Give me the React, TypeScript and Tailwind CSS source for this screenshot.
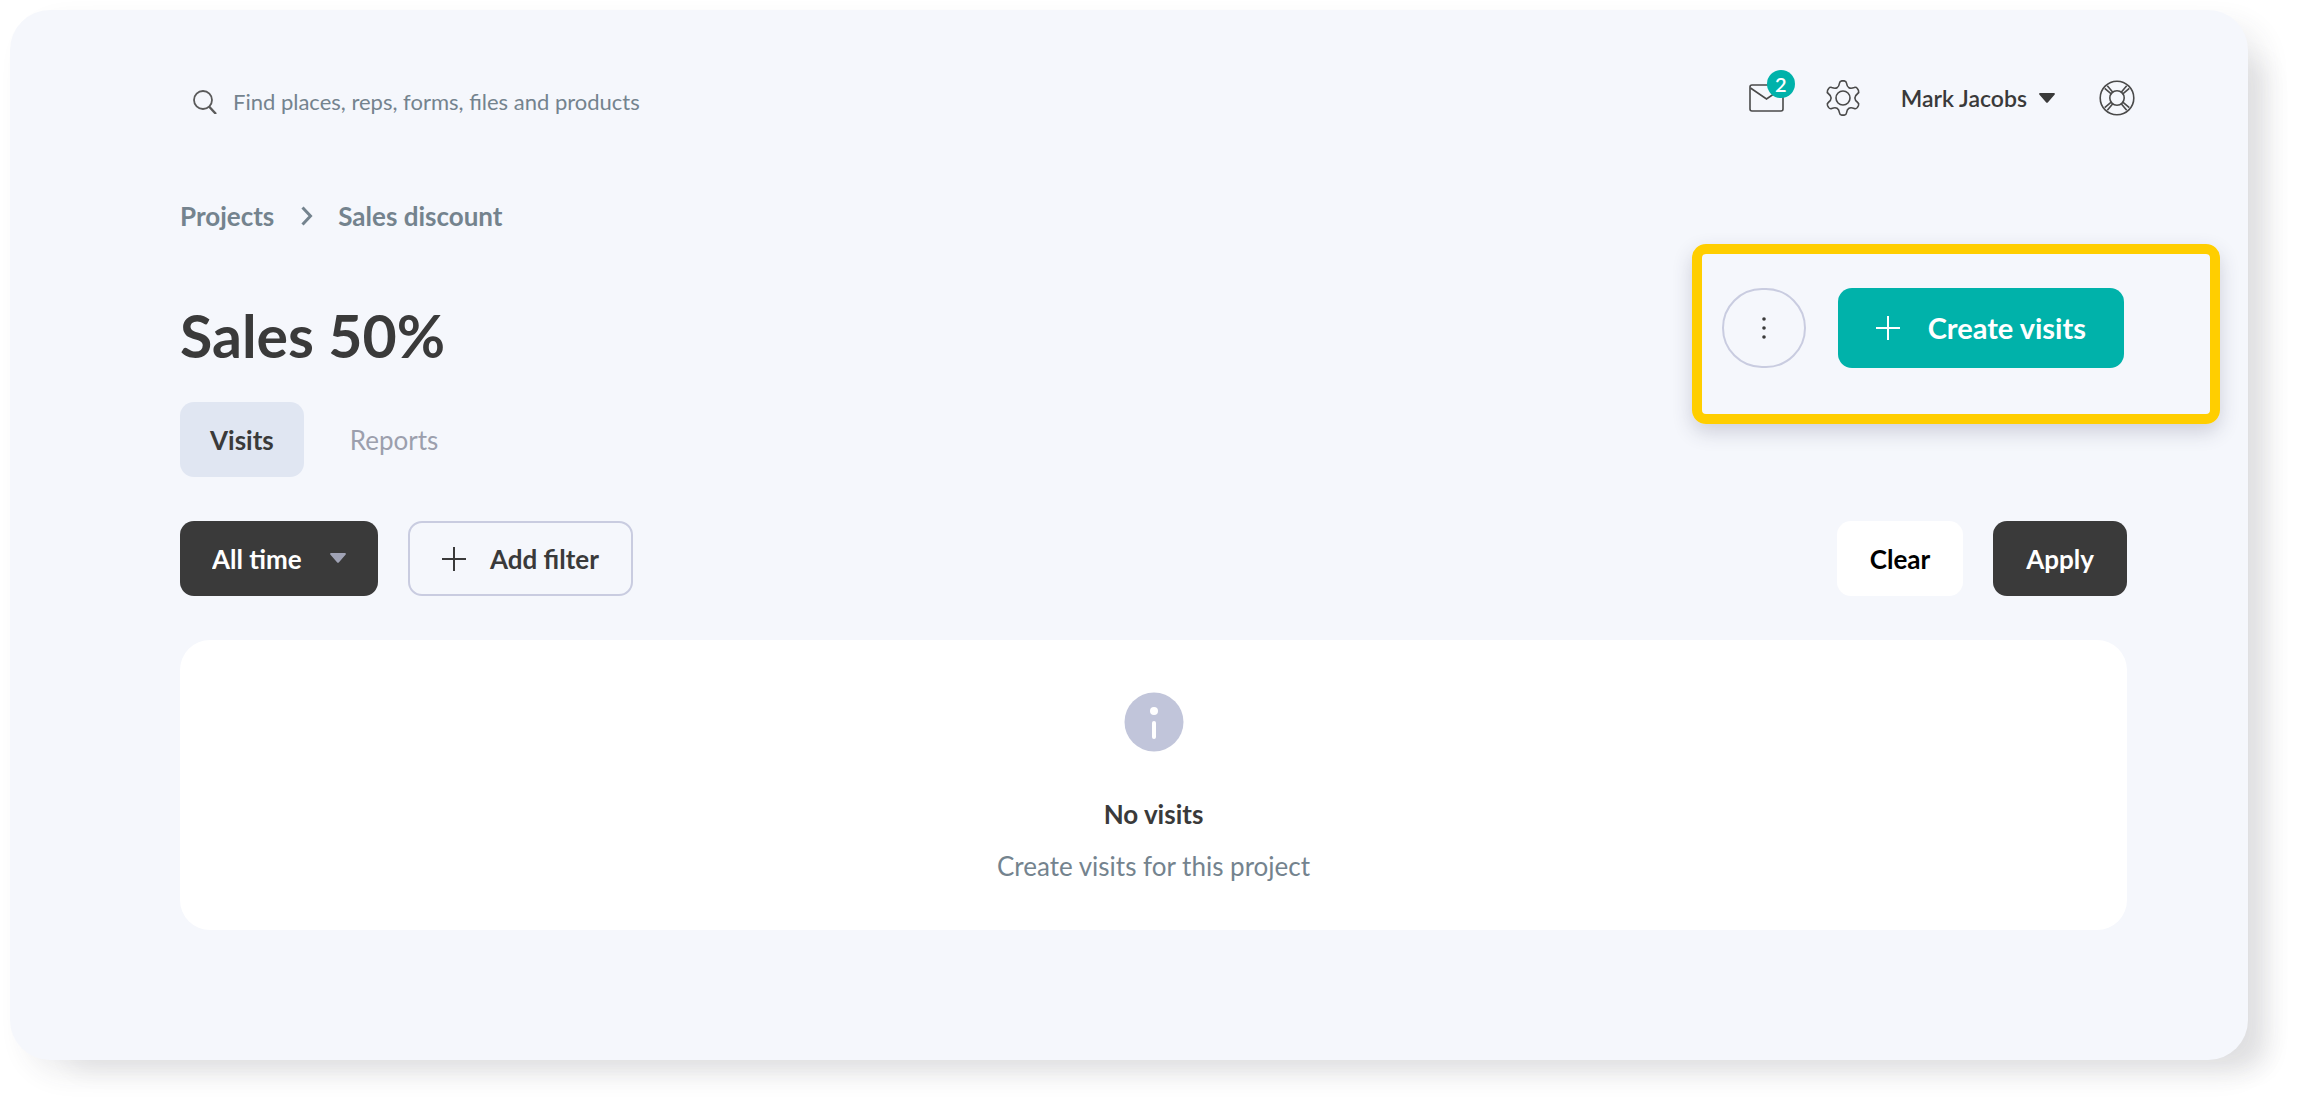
import { useState } from "react";

const polar = (r: number, deg: number) => {
  const a = ((deg - 90) * Math.PI) / 180;
  return `${(18 + r * Math.cos(a)).toFixed(2)} ${(18 + r * Math.sin(a)).toFixed(2)}`;
};

// six rounded teeth around the centre
const GEAR_PATH =
  [0, 60, 120, 180, 240, 300]
    .map((t, i) =>
      `${i ? "L" : "M"}${polar(15.4, t - 13)} Q${polar(17.2, t - 11)} ${polar(17.2, t - 4)} L${polar(17.2, t + 4)} Q${polar(17.2, t + 11)} ${polar(15.4, t + 13)} Q${polar(9, t + 30)} ${polar(15.4, t + 47)}`,
    )
    .join(" ") + " Z";

function SearchIcon() {
  return (
    <svg className="size-6" viewBox="0 0 24 24" fill="none" stroke="#5a5a5a" strokeWidth="1.8" aria-hidden="true">
      <circle cx="10" cy="10" r="9" />
      <path d="M16 16.5 23 24" strokeWidth="2.4" />
    </svg>
  );
}

function MailIcon() {
  return (
    <svg className="h-7 w-9" viewBox="0 0 36 28" fill="none" stroke="#4a4a4a" strokeWidth="1.6" aria-hidden="true">
      <rect x="1" y="1" width="33" height="26" rx="2" />
      <path d="M1.5 4 17.5 15 33.5 4" />
    </svg>
  );
}

function GearIcon() {
  return (
    <svg className="size-9" viewBox="0 0 36 36" fill="none" stroke="#4a4a4a" strokeWidth="1.6" strokeLinejoin="round" aria-hidden="true">
      <path d={GEAR_PATH} />
      <circle cx="18" cy="18" r="7" />
    </svg>
  );
}

function HelpIcon() {
  return (
    <svg className="size-9" viewBox="0 0 36 36" fill="none" stroke="#4a4a4a" strokeWidth="1.6" aria-hidden="true">
      <circle cx="18" cy="18" r="16.8" />
      <circle cx="18" cy="18" r="7.2" />
      <path d="M12.200 13.800 5.700 8.300M13.800 12.200 8.300 5.700M23.800 13.800 30.300 8.300M22.200 12.200 27.700 5.700M12.200 22.200 5.700 27.700M13.800 23.800 8.300 30.300M23.800 22.200 30.300 27.700M22.200 23.800 27.700 30.300" />
    </svg>
  );
}

function Caret({ className }: { className: string }) {
  return (
    <svg className={className} viewBox="0 0 16 10" fill="currentColor" aria-hidden="true">
      <path d="M1.2 0h13.6c1 0 1.4 1 .7 1.700L9 9.200c-.6.7-1.500.7-2 0L.5 1.700C-.2 1 .2 0 1.200 0Z" />
    </svg>
  );
}

function PlusIcon() {
  return (
    <svg className="size-6" viewBox="0 0 24 24" fill="none" stroke="currentColor" strokeWidth="2" aria-hidden="true">
      <path d="M12 0v24M0 12h24" />
    </svg>
  );
}

const TABS = ["Visits", "Reports"];

export default function App() {
  const [tab, setTab] = useState("Visits");

  return (
    <div className="bg-white pt-[10px] pr-[50px] pb-[50px] pl-[10px] font-['Lato',sans-serif] text-[26px] leading-8 text-[#3a3a3a]">
      <div className="rounded-[40px] bg-[#f5f7fc] pt-[70px] pr-[121px] pb-[130px] pl-[170px] shadow-[16px_14px_28px_rgba(50,50,70,0.09),40px_30px_24px_-20px_rgba(50,50,70,0.08)]">
        <header className="-mr-2 flex h-9 items-center justify-between">
          <label className="flex items-center gap-4 pt-2 pl-[13px]">
            <SearchIcon />
            <input
              type="search"
              aria-label="Search"
              placeholder="Find places, reps, forms, files and products"
              className="w-[480px] bg-transparent text-[22px] outline-none placeholder:text-[#74838e]"
            />
          </label>
          <div className="flex items-center">
            <button aria-label="Messages" className="relative mr-10">
              <MailIcon />
              <span className="absolute -top-[14px] -right-[10px] flex size-7 items-center justify-center rounded-full bg-[#00b2aa] text-xl font-semibold text-white">2</span>
            </button>
            <button aria-label="Settings" className="mr-10"><GearIcon /></button>
            <button className="mr-11 flex items-center gap-3 text-[23px] font-semibold">
              Mark Jacobs
              <Caret className="h-[10px] w-4" />
            </button>
            <button aria-label="Help"><HelpIcon /></button>
          </div>
        </header>

        <nav aria-label="Breadcrumb" className="mt-[84px] flex items-center gap-6 font-bold text-[#74838e]">
          <a href="#projects">Projects</a>
          <svg className="h-5 w-4" viewBox="0 0 16 20" fill="none" stroke="currentColor" strokeWidth="3" aria-hidden="true">
            <path d="m4.500 1.500 8 8.500-8 8.500" />
          </svg>
          <a href="#sales-discount">Sales discount</a>
        </nav>

        <div className="mt-14 flex items-start justify-between">
          <h1 className="mt-3 text-[59px] leading-[72px] font-bold">Sales 50%</h1>
          <div className="relative mr-[3px] flex gap-8">
            <button aria-label="More" className="flex h-20 w-[84px] items-center justify-center rounded-full border-2 border-[#c9cce0]">
              <svg className="h-6 w-1" viewBox="0 0 4 24" fill="#3a3a3a" aria-hidden="true">
                <circle cx="2" cy="3" r="1.800" />
                <circle cx="2" cy="12" r="1.800" />
                <circle cx="2" cy="21" r="1.800" />
              </svg>
            </button>
            <button className="flex h-20 items-center gap-7 rounded-[14px] bg-[#00b2aa] px-[38px] text-[29px] font-bold text-white">
              <PlusIcon />
              Create visits
            </button>
            {/* highlight frame around the actions */}
            <div className="pointer-events-none absolute -top-11 -right-24 -bottom-14 -left-[30px] rounded-[14px] border-[10px] border-[#ffce00] shadow-[0_8px_20px_rgba(50,50,80,0.2)]" />
          </div>
        </div>

        <div role="tablist" className="mt-[30px] flex gap-4">
          {TABS.map((t) => (
            <button
              key={t}
              role="tab"
              aria-selected={tab === t}
              onClick={() => setTab(t)}
              className={`h-[75px] rounded-[14px] px-[30px] ${tab === t ? "bg-[#e0e6f2] font-bold" : "text-[#9c9fad]"}`}
            >
              {t}
            </button>
          ))}
        </div>

        <div className="mt-11 flex items-center justify-between font-bold">
          <div className="flex gap-[30px]">
            <div className="relative">
              <select aria-label="Period" className="h-[75px] w-[198px] appearance-none rounded-[14px] bg-[#3a3a3a] pl-8 text-white">
                <option>All time</option>
              </select>
              <Caret className="pointer-events-none absolute top-8 right-8 h-[10px] w-4 text-[#a0a3b5]" />
            </div>
            <button className="flex h-[75px] items-center gap-6 rounded-[14px] border-2 border-[#c9cce0] px-8">
              <PlusIcon />
              Add filter
            </button>
          </div>
          <div className="flex gap-[30px]">
            <button className="h-[75px] rounded-[14px] bg-white px-[33px] text-black">Clear</button>
            <button className="h-[75px] rounded-[14px] bg-[#3a3a3a] px-[33px] text-white">Apply</button>
          </div>
        </div>

        <section className="mt-11 flex flex-col items-center rounded-[30px] bg-white pt-[52px] pb-12">
          <svg className="size-[60px]" viewBox="0 0 60 60" aria-hidden="true">
            <circle cx="30" cy="30" r="29.500" fill="#c1c5da" />
            <circle cx="30" cy="19" r="4" fill="#fff" />
            <rect x="28" y="29" width="4" height="18" rx="2" fill="#fff" />
          </svg>
          <h2 className="mt-[46px] font-bold">No visits</h2>
          <p className="mt-5 text-[#74838e]">Create visits for this project</p>
        </section>
      </div>
    </div>
  );
}
